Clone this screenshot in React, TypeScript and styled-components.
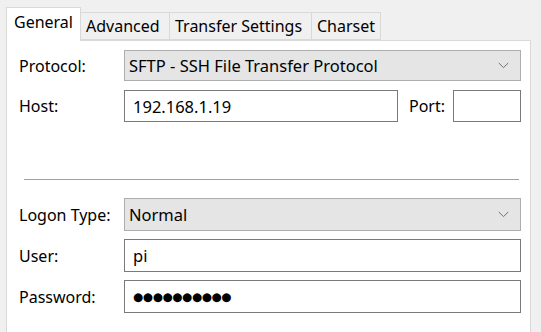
import React from 'react';
import styled, { createGlobalStyle } from 'styled-components';

const GlobalStyle = createGlobalStyle`
  html, body {
    margin: 0;
    padding: 0;
    background: #f0f0f0;
  }
  body {
    font-family: "Noto Sans", "Open Sans", sans-serif;
    color: #000;
    overflow: hidden;
  }
`;

const Page = styled.div`
  width: 541px;
  height: 332px;
  padding: 7px 0 0 6px;
  box-sizing: border-box;
`;

const TabBar = styled.div`
  display: flex;
  align-items: flex-end;
  height: 33px;
  position: relative;
  z-index: 1;
`;

const Tab = styled.div<{ $active?: boolean; $width: number }>`
  box-sizing: border-box;
  width: ${(p) => p.$width}px;
  height: ${(p) => (p.$active ? 34 : 28)}px;
  margin-bottom: ${(p) => (p.$active ? -1 : 0)}px;
  padding-left: ${(p) => (p.$active ? 7 : 5)}px;
  display: flex;
  align-items: ${(p) => (p.$active ? 'flex-start' : 'center')};
  padding-top: ${(p) => (p.$active ? 3 : 0)}px;
  background: ${(p) => (p.$active ? '#ffffff' : '#f0f0f0')};
  border: 1px solid #d9d9d9;
  border-bottom: ${(p) => (p.$active ? 'none' : '1px solid #d9d9d9')};
  margin-left: ${(p) => (p.$active ? 0 : -1)}px;
  font-size: 16px;
  white-space: nowrap;
`;

const Panel = styled.div`
  box-sizing: border-box;
  width: 525px;
  height: 300px;
  background: #ffffff;
  border: 1px solid #d9d9d9;
  border-bottom: none;
  padding: 9px 9px 0 12px;
`;

const Grid = styled.div`
  display: grid;
  grid-template-columns: 105px 1fr;
  align-items: center;
`;

const Label = styled.div`
  font-size: 16px;
  white-space: nowrap;
`;

const Row = styled.div<{ $gap: number }>`
  display: contents;
  & > * {
    margin-top: ${(p) => p.$gap}px;
  }
`;

const Combo = styled.div<{ $height: number }>`
  box-sizing: border-box;
  height: ${(p) => p.$height}px;
  background: #e5e5e5;
  border: 1px solid #adadad;
  display: flex;
  align-items: center;
  justify-content: space-between;
  padding: 0 11px 0 4px;
  font-size: 16.5px;
`;

const Input = styled.div<{ $height: number }>`
  box-sizing: border-box;
  height: ${(p) => p.$height}px;
  background: #ffffff;
  border: 1px solid #7a7a7a;
  display: flex;
  align-items: center;
  padding: 0 8px;
  font-size: 16.5px;
  flex: 1;
`;

const HostLine = styled.div`
  display: flex;
  align-items: center;
`;

const PortLabel = styled.div`
  font-size: 16px;
  margin: 0 8px 0 11px;
`;

const PortInput = styled.div`
  box-sizing: border-box;
  width: 68px;
  height: 32px;
  background: #ffffff;
  border: 1px solid #7a7a7a;
`;

const Separator = styled.div`
  grid-column: 1 / span 2;
  height: 1px;
  background: #a0a0a0;
  margin: 57px 2px 18px 5px;
`;

const Dots = styled.span`
  font-family: "DejaVu Sans", sans-serif;
  font-size: 11.6px;
  letter-spacing: -0.3px;
`;

const Chevron = () => (
  <svg width="11" height="7" viewBox="0 0 11 7">
    <path d="M0.8 1 L5.5 5.6 L10.2 1" fill="none" stroke="#707070" strokeWidth="1" />
  </svg>
);

const tabs = [
  { label: 'General', width: 75, active: true },
  { label: 'Advanced', width: 90 },
  { label: 'Transfer Settings', width: 143 },
  { label: 'Charset', width: 70 },
];

const App: React.FC = () => {
  return (
    <Page>
      <GlobalStyle />
      <TabBar>
        {tabs.map((t) => (
          <Tab key={t.label} $active={t.active} $width={t.width}>
            {t.label}
          </Tab>
        ))}
      </TabBar>
      <Panel>
        <Grid>
          <Label>Protocol:</Label>
          <Combo $height={31}>
            <span>SFTP - SSH File Transfer Protocol</span>
            <Chevron />
          </Combo>
          <Row $gap={9}>
            <Label>Host:</Label>
            <HostLine>
              <Input $height={32}>192.168.1.19</Input>
              <PortLabel>Port:</PortLabel>
              <PortInput />
            </HostLine>
          </Row>
          <Separator />
          <Label>Logon Type:</Label>
          <Combo $height={33}>
            <span>Normal</span>
            <Chevron />
          </Combo>
          <Row $gap={8}>
            <Label>User:</Label>
            <Input $height={33}>pi</Input>
          </Row>
          <Row $gap={8}>
            <Label>Password:</Label>
            <Input $height={33}>
              <Dots>●●●●●●●●●●</Dots>
            </Input>
          </Row>
        </Grid>
      </Panel>
    </Page>
  );
};

export default App;
